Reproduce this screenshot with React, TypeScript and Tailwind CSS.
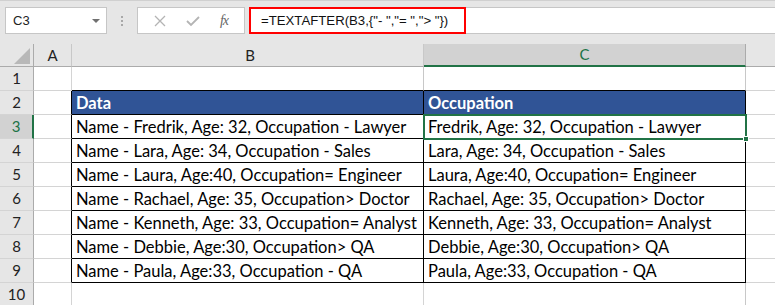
import React from 'react';

// Spreadsheet data for B2:C9
const rows: [string, string][] = [
  ['Name - Fredrik, Age: 32, Occupation - Lawyer', 'Fredrik, Age: 32, Occupation - Lawyer'],
  ['Name - Lara, Age: 34, Occupation - Sales', 'Lara, Age: 34, Occupation - Sales'],
  ['Name - Laura, Age:40, Occupation= Engineer', 'Laura, Age:40, Occupation= Engineer'],
  ['Name - Rachael, Age: 35, Occupation> Doctor', 'Rachael, Age: 35, Occupation> Doctor'],
  ['Name - Kenneth, Age: 33, Occupation= Analyst', 'Kenneth, Age: 33, Occupation= Analyst'],
  ['Name - Debbie, Age:30, Occupation> QA', 'Debbie, Age:30, Occupation> QA'],
  ['Name - Paula, Age:33, Occupation - QA', 'Paula, Age:33, Occupation - QA'],
];

const cellFont = "font-['Lato','Liberation_Sans',sans-serif] text-[16.5px] leading-[20px] text-black";
const headFont = "font-['Lato','Liberation_Sans',sans-serif] text-[15px]";

const FormulaBar = () => (
  <div className="h-[44px] bg-[#e6e6e6] border-t border-[#d0d0d0] flex items-start pt-[6px] pl-[5px]">
    {/* name box */}
    <div className="w-[102px] h-[27px] bg-white border border-[#c6c6c6] flex items-center justify-between pl-[7px] pr-[6px]">
      <span className="font-['Liberation_Sans',sans-serif] text-[13px] text-[#222]">C3</span>
      <span className="w-0 h-0 border-l-[4px] border-r-[4px] border-t-[4px] border-l-transparent border-r-transparent border-t-[#707070]" />
    </div>
    {/* splitter dots */}
    <div className="w-[30px] h-[27px] flex flex-col items-center justify-center gap-[2px]">
      <span className="w-[2px] h-[2px] bg-[#a8a8a8]" />
      <span className="w-[2px] h-[2px] bg-[#a8a8a8]" />
      <span className="w-[2px] h-[2px] bg-[#a8a8a8]" />
    </div>
    {/* cancel / enter / fx */}
    <div className="w-[108px] h-[27px] bg-white border border-[#c6c6c6] flex items-center justify-around px-[6px]">
      <svg width="12" height="12" viewBox="0 0 12 12">
        <path d="M1 1 L11 11 M11 1 L1 11" stroke="#b4b4b4" strokeWidth="1.3" fill="none" />
      </svg>
      <svg width="14" height="12" viewBox="0 0 14 12">
        <path d="M1 6 L5 10 L13 2" stroke="#b4b4b4" strokeWidth="1.8" fill="none" />
      </svg>
      <span className="font-['Liberation_Serif',serif] italic text-[14px] text-[#666] tracking-[-1px]">fx</span>
    </div>
    {/* formula input */}
    <div className="flex-1 ml-[5px] h-[27px] bg-white border-y border-[#c6c6c6] flex items-center">
      <div className="h-[27px] w-[217px] border-2 border-[#ff0000] flex items-center pl-[10px] -ml-px">
        <span className="font-['Liberation_Sans',sans-serif] text-[13.2px] text-[#111] whitespace-pre">{'=TEXTAFTER(B3,{"- ","= ","> "})'}</span>
      </div>
    </div>
  </div>
);

export default function App() {
  const grid = 'border-[#d4d4d4]';
  return (
    <div className="w-[775px] h-[305px] overflow-hidden bg-white">
      <FormulaBar />
      <div className="grid grid-cols-[34px_38px_352px_322px_1fr] grid-rows-[23px_repeat(10,24px)]">
        {/* column headers */}
        <div className="relative bg-[#e6e6e6] border-r border-b border-[#ababab]">
          <svg className="absolute right-[3px] bottom-[2px]" width="16" height="16" viewBox="0 0 16 16">
            <path d="M16 0 L16 16 L0 16 Z" fill="#b8b8b8" />
          </svg>
        </div>
        <div className={`bg-[#e6e6e6] border-r border-b border-r-[#c8c8c8] border-b-[#ababab] flex items-center justify-center text-[#222] ${headFont}`}>A</div>
        <div className={`bg-[#e6e6e6] border-r border-b border-r-[#c8c8c8] border-b-[#ababab] flex items-center justify-end pr-[168px] text-[#222] ${headFont}`}>B</div>
        <div className={`bg-[#d2d2d2] border-r border-[#ababab] border-b-2 border-b-[#217346] flex items-center justify-center text-[#217346] ${headFont}`}>C</div>
        <div className="bg-[#e6e6e6] border-b border-[#ababab]" />

        {Array.from({ length: 10 }).map((_, i) => {
          const r = i + 1;
          const sel = r === 3;
          const inTable = r >= 2 && r <= 9;
          const isHead = r === 2;
          const data = r >= 3 && r <= 9 ? rows[r - 3] : null;
          return (
            <React.Fragment key={r}>
              <div
                className={`border-b border-[#d4d4d4] flex items-center justify-center ${headFont} ${
                  sel
                    ? 'bg-[#d2d2d2] text-[#217346] border-r-2 border-r-[#217346]'
                    : 'bg-[#e6e6e6] text-[#222] border-r border-r-[#ababab]'
                }`}
              >
                {r}
              </div>
              <div className={`border-b ${grid} border-r ${inTable ? 'border-r-black' : ''}`} />
              <div
                className={`border-r border-b flex items-end pb-[1px] pl-[4px] whitespace-nowrap overflow-hidden ${
                  inTable ? 'border-black' : r === 1 ? 'border-r-[#c8c8c8] border-b-black' : grid
                } ${isHead ? 'bg-[#305496]' : ''} ${cellFont}`}
              >
                {isHead ? <span className="text-white font-bold">Data</span> : data ? data[0] : null}
              </div>
              <div
                className={`relative border-r border-b flex items-end pb-[1px] pl-[4px] whitespace-nowrap overflow-hidden ${
                  inTable ? 'border-black' : r === 1 ? 'border-r-[#c8c8c8] border-b-black' : 'border-[#c8c8c8] border-b-[#d4d4d4]'
                } ${isHead ? 'bg-[#305496]' : ''} ${cellFont}`}
              >
                {isHead ? <span className="text-white font-bold">Occupation</span> : data ? data[1] : null}
              </div>
              <div className={`border-b ${grid}`} />
            </React.Fragment>
          );
        })}
      </div>
      {/* active cell outline on C3 */}
      <div className="pointer-events-none absolute left-[423px] top-[114px] w-[324px] h-[26px] border-2 border-[#217346]">
        <span className="absolute -right-[4px] -bottom-[4px] w-[6px] h-[6px] bg-[#217346] border border-white" />
      </div>
    </div>
  );
}
